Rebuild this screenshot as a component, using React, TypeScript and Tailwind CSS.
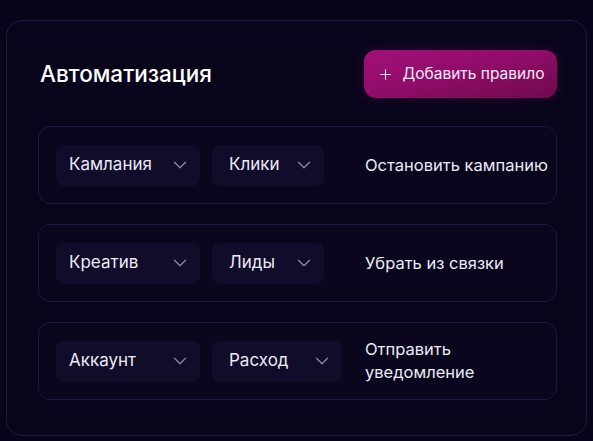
import React from 'react';
import { ChevronDown, Plus } from 'lucide-react';

type Rule = {
  target: string;
  metric: string;
  metricWidth: string;
  action: string;
};

const rules: Rule[] = [
  { target: 'Камлания', metric: 'Клики', metricWidth: 'w-[112px]', action: 'Остановить кампанию' },
  { target: 'Креатив', metric: 'Лиды', metricWidth: 'w-[112px]', action: 'Убрать из связки' },
  { target: 'Аккаунт', metric: 'Расход', metricWidth: 'w-[130px]', action: 'Отправить уведомление' },
];

function Select({ label, className }: { label: string; className: string }) {
  return (
    <div
      className={`${className} h-[41px] flex items-center justify-between pr-[9px] rounded-lg bg-[#110c2a] text-[17px] text-[#ecebf5]`}
    >
      <span>{label}</span>
      <ChevronDown size={22} strokeWidth={1.3} className="text-[#8e8aae]" />
    </div>
  );
}

export default function App() {
  return (
    <div
      className="min-h-[441px] w-full bg-[#07041a] pt-[20px] px-[6px] pb-[5px]"
      style={{ fontFamily: 'Inter, "Noto Sans", sans-serif' }}
    >
      <div className="h-[416px] rounded-2xl border border-[#1d1846] bg-[#08051b] pt-[29px] pl-[31px] pr-[29px]">
        <div className="flex items-center justify-between h-[48px]">
          <h2 className="ml-[2px] text-[22.5px] font-medium text-white">Автоматизация</h2>
          <button className="h-[48px] w-[193px] flex items-center justify-center gap-[9px] rounded-xl bg-gradient-to-br from-[#a3107a] via-[#8f0c68] to-[#6e0a4c] text-[15.5px] text-[#f6e9f2] shadow-[0_0_12px_rgba(160,16,110,0.25)]">
            <Plus size={17} strokeWidth={1.4} />
            <span>Добавить правило</span>
          </button>
        </div>

        <div className="mt-[28px] flex flex-col gap-[20px]">
          {rules.map(rule => (
            <div
              key={rule.target}
              className="h-[78px] flex items-center pl-[17px] rounded-xl border border-[#1c1743] bg-[#09061d]"
            >
              <Select label={rule.target} className="w-[144px] pl-[13px]" />
              <div className="ml-[12px] w-[130px]">
                <Select label={rule.metric} className={`${rule.metricWidth} pl-[17px]`} />
              </div>
              <div className="ml-[23px] w-[186px] text-[16.5px] leading-[23px] text-[#ecebf5]">
                {rule.action}
              </div>
            </div>
          ))}
        </div>
      </div>
    </div>
  );
}
